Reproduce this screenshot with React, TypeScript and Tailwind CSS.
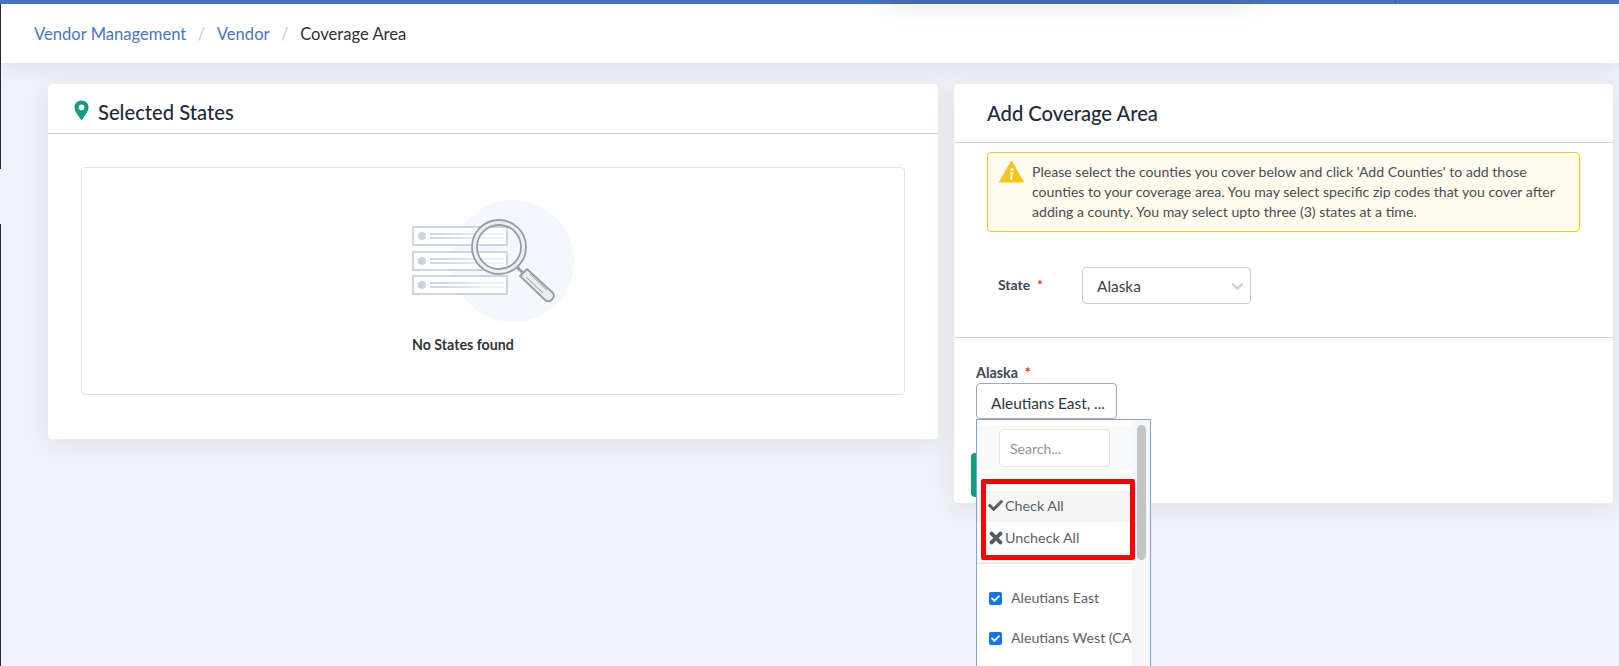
import React from 'react';
import { ChevronDown } from 'lucide-react';
import { FaCheck } from 'react-icons/fa';

const lato = { fontFamily: 'Lato, sans-serif' };

const PinIcon = () => (
  <svg width="15" height="21" viewBox="0 0 15 21">
    <path d="M7.5 0.5C3.4 0.5 0.5 3.6 0.5 7.4c0 2.2 1 3.9 2.2 6L7.5 20.5l4.8-7.1c1.2-2.1 2.2-3.8 2.2-6C14.5 3.6 11.6 0.5 7.5 0.5z" fill="#0f9d82" />
    <circle cx="7.5" cy="7.3" r="2.9" fill="#fff" />
  </svg>
);

const WarningIcon = () => (
  <svg width="25" height="23" viewBox="0 0 25 23">
    <path d="M12.5 1L24.5 22H0.5z" fill="#f5c518" stroke="#f5c518" strokeLinejoin="round" />
    <circle cx="12.9" cy="9.5" r="1.5" fill="#fff" />
    <path d="M11.2 12.5h3l-1.2 6h1v1h-3.2l1.2-6h-.9z" fill="#fff" />
  </svg>
);

const CrossIcon = () => (
  <svg width="14" height="14" viewBox="0 0 14 14" className="shrink-0">
    <path d="M2.6 2.6l8.8 8.8M11.4 2.6l-8.8 8.8" stroke="#555a64" strokeWidth="3.8" strokeLinecap="round" />
  </svg>
);

// the empty state picture: three rows and a magnifier
const EmptyPicture = () => (
  <svg width="162" height="124" viewBox="0 0 162 124" className="block">
    <defs>
      <linearGradient id="fade" x1="0" x2="1" y1="0" y2="0">
        <stop offset="0" stopColor="#c9d3e2" />
        <stop offset="0.8" stopColor="#eef2f7" />
      </linearGradient>
    </defs>
    <circle cx="101" cy="62" r="61" fill="#f4f7fb" />
    {[28, 53, 77].map((y) => (
      <g key={y}>
        <rect x="1" y={y} width="94" height="18" fill="#fff" stroke="#ccd5e3" strokeWidth="2" />
        <circle cx="10" cy={y + 9} r="4" fill="#c9d3e3" />
        <rect x="18" y={y + 6} width="74" height="2" fill="url(#fade)" />
        <rect x="18" y={y + 10} width="74" height="2" fill="url(#fade)" />
      </g>
    ))}
    <circle cx="87" cy="48" r="24.500" fill="none" stroke="#eceef1" strokeWidth="5" />
    <circle cx="87" cy="48" r="27" fill="none" stroke="#999ca2" strokeWidth="1.8" />
    <circle cx="87" cy="48" r="22" fill="none" stroke="#999ca2" strokeWidth="1.8" />
    <path d="M105 68l7 7" stroke="#999ca2" strokeWidth="3" />
    <path d="M108 77l7-7 25 23c2.500 2.500 2.500 5 0 7.500s-5 2.500-7.500 0z" fill="#e9ebee" stroke="#999ca2" strokeWidth="1.8" />
    <path d="M114 78l17 16M118 75l17 16" stroke="#999ca2" strokeWidth="1" />
  </svg>
);

const Tick = () => (
  <span className="flex h-[13px] w-[13px] shrink-0 items-center justify-center rounded-[2px] bg-[#0b76f0]">
    <FaCheck size={9} className="text-white" />
  </span>
);

const CountyDropdown = () => (
  <div className="absolute left-0 top-[36px] z-10 h-[247px] w-[175px] overflow-hidden border border-b-0 border-[#7fa3d8] bg-white">
    <div className="mt-[6px] flex h-[44px] w-[155px] items-center bg-[#f8f9fa] pl-[22px]">
      <div className="flex h-[38px] w-[111px] items-center rounded-[4px] border border-[#e2e5ec] bg-white pl-[10px] text-[14px] text-[#8d93a0]">
        Search...
      </div>
    </div>
    <div className="mt-[21px] flex h-[31px] items-center gap-[2px] bg-[#f5f5f5] pb-[2px] pl-[11px] text-[14.3px] text-[#5c616c]">
      <FaCheck size={15} className="shrink-0 text-[#555a64]" />
      Check All
    </div>
    <div className="flex h-[32px] items-center gap-[2px] pl-[12px] text-[14.3px] text-[#5c616c]">
      <CrossIcon />
      Uncheck All
    </div>
    <div className="mt-[8px] h-[2px] bg-[#e9e9e9]" />
    <div className="mt-[14px] flex h-[40px] items-center gap-[9px] pl-[12px] text-[14.2px] text-[#5c616c]">
      <Tick />
      Aleutians East
    </div>
    <div className="flex h-[40px] items-center gap-[9px] whitespace-nowrap pl-[12px] text-[14.2px] text-[#5c616c]">
      <Tick />
      Aleutians West (CA)
    </div>
    <div className="absolute right-0 top-0 h-full w-[18px] bg-[#f5f7fb]" />
    <div className="absolute right-[4px] top-[5px] h-[135px] w-[9px] rounded-[5px] bg-[#c4c5c9]" />
    <div className="absolute left-[4px] top-[59px] h-[81px] w-[154px] rounded-[2px] border-[5px] border-[#ff0000]" />
  </div>
);

export default function App() {
  return (
    <div className="relative flex h-[666px] flex-col overflow-hidden bg-[#eff1f6] text-[#1f2a3d]" style={lato}>
      <div className="h-[4px] bg-[#4a76c0]" />
      {/* leftovers of the page behind: sidebar edge, bar tick and a menu shadow */}
      <div className="absolute left-0 top-[4px] h-[165px] w-px bg-[#1f2a4d]" />
      <div className="absolute left-0 top-[224px] h-[442px] w-px bg-[#1f2a4d]" />
      <div className="absolute left-[1395px] top-0 h-[4px] w-px bg-[#3a5a94]" />
      <div className="absolute left-[890px] top-[-30px] z-10 h-[30px] w-[360px] shadow-[0_4px_30px_rgba(0,0,0,0.11)]" />

      <div className="flex h-[59px] items-center gap-[11.500px] bg-white pl-[34px] pt-[2px] text-[16.6px] shadow-[0_2px_20px_rgba(40,50,80,0.1)]">
        <span className="text-[#4a76c0]">Vendor Management</span>
        <span className="text-[#c4c7cc]">/</span>
        <span className="text-[#4a76c0]">Vendor</span>
        <span className="text-[#c4c7cc]">/</span>
        <span className="text-[#2b2f38]">Coverage Area</span>
      </div>

      <div className="flex items-start gap-[16px] pl-[48px] pr-[6px] pt-[21px]">
        <div className="w-[890px] rounded-[4px] bg-white shadow-[0_4px_26px_rgba(40,50,80,0.08)]">
          <div className="flex h-[50px] items-center gap-[9px] border-b border-[#c8cfde] pl-[26px] pt-[4px] text-[20.2px] font-medium">
            <PinIcon />
            <span className="pt-[3px]">Selected States</span>
          </div>
          <div className="px-[33px] pb-[44px] pt-[33px]">
            <div className="flex h-[228px] flex-col items-center rounded-[4px] border border-[#e0e3ee] pt-[31px]">
              <div className="w-[162px]">
                <EmptyPicture />
                <div className="mt-[11px] whitespace-nowrap text-[14.2px] font-bold text-[#2f3440]">No States found</div>
              </div>
            </div>
          </div>
        </div>

        <div className="flex-1 rounded-[4px] bg-white pb-[6px] shadow-[0_4px_26px_rgba(40,50,80,0.08)]">
          <div className="flex h-[59px] items-center border-b border-[#c8cfde] pl-[33px] text-[20.2px] font-medium">
            Add Coverage Area
          </div>
          <div className="ml-[33px] mr-[33px] mt-[9px] flex h-[80px] gap-[6px] rounded-[4px] border border-[#f5c518] bg-[#fffbed] pl-[11px] pt-[9px] text-[14.1px] leading-[20px] text-[#4a4d55]">
            <div className="mt-[-2px] shrink-0"><WarningIcon /></div>
            <p className="pl-[2px]">
              Please select the counties you cover below and click 'Add Counties' to add those<br />
              counties to your coverage area. You may select specific zip codes that you cover after<br />
              adding a county. You may select upto three (3) states at a time.
            </p>
          </div>
          <div className="flex h-[106px] items-center border-b border-[#c8cfde] py-[5px] pl-[44px]">
            <span className="w-[84px] text-[14px] font-bold text-[#3f4656]">
              State <span className="text-[#ef2f2f]">&nbsp;*</span>
            </span>
            <div className="mt-[2px] flex h-[37px] w-[169px] items-center justify-between rounded-[4px] border border-[#c9ccd3] pl-[14px] pr-[4px] pt-[2px] text-[15.4px] text-[#3a3f4a]">
              Alaska
              <ChevronDown size={17} strokeWidth={3.5} className="text-[#c9cfdf]" />
            </div>
          </div>
          <div className="ml-[22px] mt-[25px] w-[141px]">
            <div className="mb-px h-[19px] text-[14.3px] font-bold leading-[19px] text-[#3f4656]">
              Alaska <span className="text-[#ef2f2f]">&nbsp;*</span>
            </div>
            <div className="relative">
              <div className="flex h-[36px] items-center rounded-[4px] border border-[#a8a8a8] pl-[14px] pt-[5px] text-[15.4px] text-[#2f3440]">
                Aleutians East, ...
              </div>
              <CountyDropdown />
            </div>
          </div>
          <div className="ml-[17px] mt-[34px] h-[44px] w-[60px] rounded-[4px] bg-[#0f9d82]" />
        </div>
      </div>
    </div>
  );
}
